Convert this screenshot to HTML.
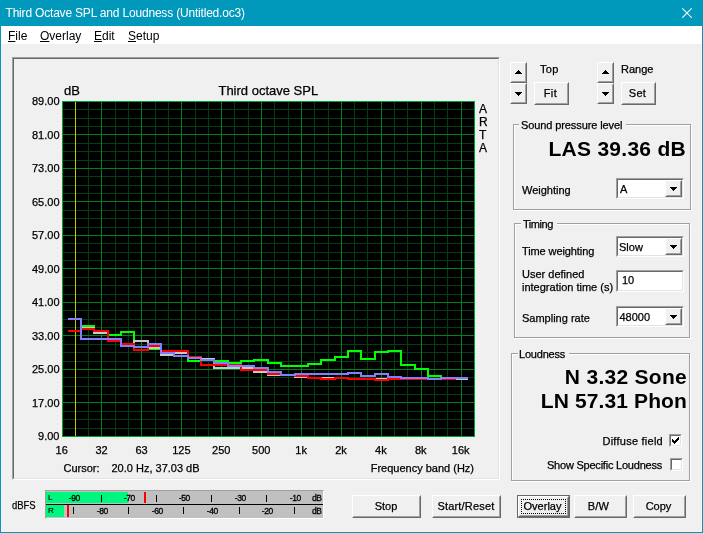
<!DOCTYPE html>
<html><head><meta charset="utf-8"><title>Third Octave SPL and Loudness (Untitled.oc3)</title>
<style>
html,body{margin:0;padding:0}
body{-webkit-text-stroke:0.25px #000;width:703px;height:533px;overflow:hidden;background:#f0f0f0;position:relative;font-family:"Liberation Sans",sans-serif;font-size:11px;color:#000}
#win *{position:absolute;box-sizing:border-box}
#win{box-shadow:inset 0 0 0 1px #fbf3f0;will-change:transform;position:absolute;left:0;top:0;width:703px;height:533px;overflow:hidden;border:1px solid #0099bc;border-top:none;box-sizing:border-box;background:#f0f0f0}
#title{-webkit-text-stroke:0;left:-1px;top:0;width:703px;height:26px;background:#0099bc;color:#fff;font-size:12px}
#title span{left:5.5px;top:6px;line-height:14px;white-space:nowrap;letter-spacing:-0.19px}
#menu{-webkit-text-stroke:0;left:0;top:26px;width:701px;height:18px;background:#fff;font-size:12px}
#menu span{top:3px;line-height:14px;white-space:nowrap}
#menu u{position:static;text-decoration:underline;text-decoration-thickness:1px;text-underline-offset:1px}
.t{white-space:nowrap;line-height:13px}
.frame{border:1px solid;border-color:#a0a0a0 #fff #fff #a0a0a0}
.frame:before{content:"";position:absolute;left:0;top:0;right:0;bottom:0;border:1px solid;border-color:#696969 #e3e3e3 #e3e3e3 #696969;box-sizing:border-box}
.btn{background:#f0f0f0;border:1px solid;border-color:#fff #696969 #696969 #fff;text-align:center;line-height:20px;white-space:nowrap}
.btn:before{content:"";position:absolute;left:0;top:0;right:0;bottom:0;border:1px solid;border-color:#f0f0f0 #a0a0a0 #a0a0a0 #f0f0f0;box-sizing:border-box}
.btn>span{position:relative!important;top:0}
.def{border-color:#696969}
.def:before{border-color:#fff #696969 #696969 #fff}
.def:after{content:"";position:absolute;left:1px;top:1px;right:1px;bottom:1px;border:1px solid;border-color:transparent #a0a0a0 #a0a0a0 transparent;box-sizing:border-box}
.focus{left:3px;top:3px;right:3px;bottom:3px;border:1px dotted #000}
.grp{border:1px solid #a0a0a0;box-shadow:1px 1px 0 #fff, inset 1px 1px 0 #fff}
.grp>b{font-weight:normal;background:#f0f0f0;top:-6px;left:5px;line-height:13px;padding:0 4px 0 2px;white-space:nowrap}
.big{-webkit-text-stroke:0;font-weight:bold;font-size:21px;line-height:22px;white-space:nowrap;text-align:right}
.edit{background:#fff;border:1px solid;border-color:#a0a0a0 #fff #fff #a0a0a0}
.edit:before{content:"";position:absolute;left:0;top:0;right:0;bottom:0;border:1px solid;border-color:#696969 #e3e3e3 #e3e3e3 #696969;box-sizing:border-box}
.dd{right:1px;top:1px;width:17px;bottom:1px}
.chk{width:13px;height:13px;background:#fff;border:1px solid;border-color:#a0a0a0 #fff #fff #a0a0a0}
.chk:before{content:"";position:absolute;left:0;top:0;right:0;bottom:0;border:1px solid;border-color:#696969 #e3e3e3 #e3e3e3 #696969;box-sizing:border-box}
#meter{left:44px;top:490px;width:279px;height:29px;background:#c0c0c0;border:1px solid;border-color:#a0a0a0 #fff #fff #a0a0a0;overflow:hidden}
.mrow{left:0;right:0}
.fill{left:0;top:0;bottom:0;background:#00f77f}
.peak{top:0;bottom:0;width:2px;background:#ff0000}
.msep{left:0;right:0;top:13px;height:1px;background:#000}
.tk{width:1px;height:7px;background:#000}
.ml{-webkit-text-stroke:0.3px #000;font-size:8.5px;line-height:10px;text-align:center;letter-spacing:-0.4px;white-space:nowrap}
</style></head><body>
<div id="win">
<div id="title"><span>Third Octave SPL and Loudness (Untitled.oc3)</span>
<svg width="10" height="10" viewBox="0 0 10 10" style="left:682px;top:8px"><path d="M0.3 0.3L9.7 9.7M9.7 0.3L0.3 9.7" stroke="#fff" stroke-width="1.1" fill="none"/></svg></div>
<div id="menu"><span style="left:7px"><u>F</u>ile</span><span style="left:39px"><u>O</u>verlay</span><span style="left:93px"><u>E</u>dit</span><span style="left:127px"><u>S</u>etup</span></div>

<div class="frame" style="left:11px;top:57px;width:488px;height:423px"></div>
<div style="left:-1px;top:0;width:703px;height:533px"><svg id="chart" width="703" height="533" viewBox="0 0 703 533" style="position:absolute;left:0;top:0" shape-rendering="crispEdges">
<rect x="62" y="101" width="413" height="336" fill="#000"/>
<path d="M62 109.5H475M62 118.5H475M62 126.5H475M62 143.5H475M62 151.5H475M62 160.5H475M62 176.5H475M62 185.5H475M62 193.5H475M62 210.5H475M62 218.5H475M62 227.5H475M62 243.5H475M62 252.5H475M62 260.5H475M62 277.5H475M62 285.5H475M62 294.5H475M62 310.5H475M62 319.5H475M62 327.5H475M62 344.5H475M62 352.5H475M62 361.5H475M62 377.5H475M62 386.5H475M62 394.5H475M62 411.5H475M62 419.5H475M62 428.5H475" stroke="#004010" stroke-width="1" fill="none"/>
<path d="M75.5 101V437M88.5 101V437M115.5 101V437M128.5 101V437M155.5 101V437M168.5 101V437M195.5 101V437M208.5 101V437M234.5 101V437M248.5 101V437M274.5 101V437M288.5 101V437M314.5 101V437M328.5 101V437M354.5 101V437M367.5 101V437M394.5 101V437M407.5 101V437M434.5 101V437M447.5 101V437" stroke="#004010" stroke-width="1" fill="none"/>
<path d="M62 134.5H475M62 168.5H475M62 201.5H475M62 235.5H475M62 268.5H475M62 302.5H475M62 335.5H475M62 369.5H475M62 402.5H475M101.5 101V437M141.5 101V437M181.5 101V437M221.5 101V437M261.5 101V437M301.5 101V437M341.5 101V437M381.5 101V437M421.5 101V437M461.5 101V437" stroke="#008020" stroke-width="1" fill="none"/>
<rect x="62.5" y="101.5" width="412" height="335" fill="none" stroke="#00a030" stroke-width="1"/>
<path d="M75.5 102V436" stroke="#c8c800" stroke-width="1"/>
<path d="M68 331 L81 331 L81 326 L94 326 L94 332 L108 332 L108 335 L121 335 L121 332 L134 332 L134 341 L148 341 L148 349 L161 349 L161 351 L174 351 L174 353 L188 353 L188 361 L201 361 L201 360 L214 360 L214 361 L228 361 L228 363 L241 363 L241 361 L254 361 L254 360 L268 360 L268 363 L281 363 L281 366 L295 366 L295 366 L308 366 L308 364 L321 364 L321 360 L335 360 L335 357 L348 357 L348 351 L361 351 L361 359 L375 359 L375 352 L388 352 L388 351 L401 351 L401 365 L415 365 L415 369 L428 369 L428 376 L441 376 L441 378 L455 378 L455 378 L468 378" stroke="#00ff00" stroke-width="2" fill="none" stroke-linejoin="miter" stroke-linecap="butt"/>
<path d="M68 331 L81 331 L81 328 L94 328 L94 333 L108 333 L108 339 L121 339 L121 344 L134 344 L134 341 L148 341 L148 348 L161 348 L161 355 L174 355 L174 353 L188 353 L188 358 L201 358 L201 359 L214 359 L214 368 L228 368 L228 368 L241 368 L241 368 L254 368 L254 372 L268 372 L268 375 L281 375 L281 375 L295 375 L295 377 L308 377 L308 378 L321 378 L321 378 L335 378 L335 378 L348 378 L348 379 L361 379 L361 379 L375 379 L375 379 L388 379 L388 379 L401 379 L401 378 L415 378 L415 378 L428 378 L428 379 L441 379 L441 379 L455 379 L455 379 L468 379" stroke="#c8c8c8" stroke-width="2" fill="none" stroke-linejoin="miter" stroke-linecap="butt"/>
<path d="M68 331 L81 331 L81 329 L94 329 L94 331 L108 331 L108 341 L121 341 L121 344 L134 344 L134 350 L148 350 L148 346 L161 346 L161 351 L174 351 L174 351 L188 351 L188 357 L201 357 L201 365 L214 365 L214 365 L228 365 L228 365 L241 365 L241 370 L254 370 L254 370 L268 370 L268 374 L281 374 L281 375 L295 375 L295 376 L308 376 L308 378 L321 378 L321 379 L335 379 L335 378 L348 378 L348 379 L361 379 L361 379 L375 379 L375 380 L388 380 L388 379 L401 379 L401 379 L415 379 L415 379 L428 379 L428 379 L441 379 L441 379 L455 379 L455 378 L468 378" stroke="#ff0000" stroke-width="2" fill="none" stroke-linejoin="miter" stroke-linecap="butt"/>
<path d="M68 319 L81 319 L81 339 L94 339 L94 339 L108 339 L108 339 L121 339 L121 346 L134 346 L134 347 L148 347 L148 344 L161 344 L161 353 L174 353 L174 356 L188 356 L188 358 L201 358 L201 360 L214 360 L214 363 L228 363 L228 366 L241 366 L241 366 L254 366 L254 368 L268 368 L268 372 L281 372 L281 375 L295 375 L295 374 L308 374 L308 374 L321 374 L321 374 L335 374 L335 374 L348 374 L348 373 L361 373 L361 376 L375 376 L375 374 L388 374 L388 377 L401 377 L401 378 L415 378 L415 378 L428 378 L428 379 L441 379 L441 378 L455 378 L455 378 L468 378" stroke="#8080ff" stroke-width="2" fill="none" stroke-linejoin="miter" stroke-linecap="butt"/>
<g font-family="Liberation Sans, sans-serif" fill="#000" stroke="#000" stroke-width="0.25" shape-rendering="auto">
<text x="59.5" y="105.0" font-size="11" text-anchor="end">89.00</text>
<text x="59.5" y="138.5" font-size="11" text-anchor="end">81.00</text>
<text x="59.5" y="172.0" font-size="11" text-anchor="end">73.00</text>
<text x="59.5" y="205.5" font-size="11" text-anchor="end">65.00</text>
<text x="59.5" y="239.0" font-size="11" text-anchor="end">57.00</text>
<text x="59.5" y="272.5" font-size="11" text-anchor="end">49.00</text>
<text x="59.5" y="306.0" font-size="11" text-anchor="end">41.00</text>
<text x="59.5" y="339.5" font-size="11" text-anchor="end">33.00</text>
<text x="59.5" y="373.0" font-size="11" text-anchor="end">25.00</text>
<text x="59.5" y="406.5" font-size="11" text-anchor="end">17.00</text>
<text x="59.5" y="440.0" font-size="11" text-anchor="end">9.00</text>
<text x="61.7" y="453.5" font-size="11" text-anchor="middle">16</text>
<text x="101.6" y="453.5" font-size="11" text-anchor="middle">32</text>
<text x="141.5" y="453.5" font-size="11" text-anchor="middle">63</text>
<text x="181.4" y="453.5" font-size="11" text-anchor="middle">125</text>
<text x="221.3" y="453.5" font-size="11" text-anchor="middle">250</text>
<text x="261.2" y="453.5" font-size="11" text-anchor="middle">500</text>
<text x="301.1" y="453.5" font-size="11" text-anchor="middle">1k</text>
<text x="341.0" y="453.5" font-size="11" text-anchor="middle">2k</text>
<text x="380.9" y="453.5" font-size="11" text-anchor="middle">4k</text>
<text x="420.8" y="453.5" font-size="11" text-anchor="middle">8k</text>
<text x="460.7" y="453.5" font-size="11" text-anchor="middle">16k</text>
<text x="64" y="95" font-size="13">dB</text>
<text x="268.3" y="95" font-size="13" text-anchor="middle">Third octave SPL</text>
<text x="479" y="113" font-size="12">A</text>
<text x="479" y="126" font-size="12">R</text>
<text x="479" y="139" font-size="12">T</text>
<text x="479" y="152" font-size="12">A</text>
<text x="63.5" y="472" font-size="11">Cursor:</text>
<text x="111.5" y="472" font-size="11">20.0 Hz, 37.03 dB</text>
<text x="474" y="472" font-size="11" text-anchor="end">Frequency band (Hz)</text>
</g>
</svg></div>

<div class="btn" style="left:509px;top:62px;width:17px;height:21px"><svg class="ar" style="left:4px;top:7px" width="7" height="4" viewBox="0 0 7 4" shape-rendering="crispEdges"><path d="M3 0h1v1h1v1h1v1h1v1h-7v-1h1v-1h1v-1h1z" fill="#000"/></svg></div><div class="btn" style="left:509px;top:83px;width:17px;height:21px"><svg class="ar" style="left:4px;top:8px" width="7" height="4" viewBox="0 0 7 4" shape-rendering="crispEdges"><path d="M0 0h7v1h-1v1h-1v1h-1v1h-1v-1h-1v-1h-1v-1h-1z" fill="#000"/></svg></div>
<span class="t" style="left:539px;top:63px;letter-spacing:0.3px">Top</span>
<div class="btn " style="left:533px;top:82px;width:35px;height:23px;line-height:20px"><span style="left:-1px;letter-spacing:0.5px">Fit</span></div>
<div class="btn" style="left:596px;top:62px;width:17px;height:21px"><svg class="ar" style="left:4px;top:7px" width="7" height="4" viewBox="0 0 7 4" shape-rendering="crispEdges"><path d="M3 0h1v1h1v1h1v1h1v1h-7v-1h1v-1h1v-1h1z" fill="#000"/></svg></div><div class="btn" style="left:596px;top:83px;width:17px;height:21px"><svg class="ar" style="left:4px;top:8px" width="7" height="4" viewBox="0 0 7 4" shape-rendering="crispEdges"><path d="M0 0h7v1h-1v1h-1v1h-1v1h-1v-1h-1v-1h-1v-1h-1z" fill="#000"/></svg></div>
<span class="t" style="left:620px;top:63px">Range</span>
<div class="btn " style="left:620px;top:82px;width:35px;height:23px;line-height:20px"><span style="left:-1px;letter-spacing:0.3px">Set</span></div>

<div class="grp" style="left:512px;top:124px;width:178px;height:86px"><b style="letter-spacing:-0.1px">Sound pressure level</b></div>
<div class="big" style="right:16px;top:138px;letter-spacing:0.28px">LAS 39.36 dB</div>
<span class="t" style="left:521px;top:184px">Weighting</span>
<div class="edit" style="left:615px;top:178px;width:68px;height:21px"><span class="t" style="left:3px;top:4px">A</span><div class="btn dd"><svg class="ar" style="left:4px;top:6px" width="7" height="4" viewBox="0 0 7 4" shape-rendering="crispEdges"><path d="M0 0h7v1h-1v1h-1v1h-1v1h-1v-1h-1v-1h-1v-1h-1z" fill="#000"/></svg></div></div>

<div class="grp" style="left:513px;top:223px;width:176px;height:115px"><b style="left:6px;letter-spacing:-0.45px">Timing</b></div>
<span class="t" style="left:521px;top:245px;letter-spacing:-0.1px">Time weighting</span>
<div class="edit" style="left:615px;top:236px;width:68px;height:21px"><span class="t" style="left:2px;top:4px">Slow</span><div class="btn dd"><svg class="ar" style="left:4px;top:6px" width="7" height="4" viewBox="0 0 7 4" shape-rendering="crispEdges"><path d="M0 0h7v1h-1v1h-1v1h-1v1h-1v-1h-1v-1h-1v-1h-1z" fill="#000"/></svg></div></div>
<span class="t" style="left:521px;top:268px">User defined</span>
<span class="t" style="left:521px;top:281px">integration time (s)</span>
<div class="edit" style="left:615px;top:270px;width:68px;height:22px"><span class="t" style="left:5px;top:3px">10</span></div>
<span class="t" style="left:521px;top:312px">Sampling rate</span>
<div class="edit" style="left:615px;top:306px;width:68px;height:21px"><span class="t" style="left:2.5px;top:4px">48000</span><div class="btn dd"><svg class="ar" style="left:4px;top:6px" width="7" height="4" viewBox="0 0 7 4" shape-rendering="crispEdges"><path d="M0 0h7v1h-1v1h-1v1h-1v1h-1v-1h-1v-1h-1v-1h-1z" fill="#000"/></svg></div></div>

<div class="grp" style="left:510px;top:353px;width:179px;height:128px"><b style="left:6px;padding-left:1px;letter-spacing:-0.2px">Loudness</b></div>
<div class="big" style="right:15px;top:366px;letter-spacing:0.28px">N 3.32 Sone</div>
<div class="big" style="right:15px;top:390px;letter-spacing:0.12px">LN 57.31 Phon</div>
<span class="t" style="right:39px;top:435px;letter-spacing:0.25px">Diffuse field</span>
<div class="chk" style="left:668px;top:434px"><svg width="7" height="7" viewBox="0 0 7 7" shape-rendering="crispEdges" style="left:2px;top:2px"><path d="M0 2h1v3h-1zM1 3h1v3h-1zM2 4h1v3h-1zM3 3h1v3h-1zM4 2h1v3h-1zM5 1h1v3h-1zM6 0h1v3h-1z" fill="#000"/></svg></div>
<span class="t" style="right:40px;top:459px;letter-spacing:-0.22px">Show Specific Loudness</span>
<div class="chk" style="left:669px;top:458px"></div>

<span class="t" style="left:11px;top:499px;transform:scaleX(0.86);transform-origin:0 0">dBFS</span>
<div id="meter">
<div class="mrow" style="top:1px;height:11px"><div class="fill" style="width:82px"></div><div class="peak" style="left:98px"></div></div>
<div class="msep"></div>
<div class="mrow" style="top:14px;height:12px"><div class="fill" style="width:18px"></div><div class="peak" style="left:21px"></div></div>
<span class="ml" style="left:16.3px;width:24px;top:2px">-90</span>
<i class="tk" style="left:27px;top:16px"></i>
<i class="tk" style="left:55px;top:4px"></i>
<span class="ml" style="left:44.3px;width:24px;top:15px">-80</span>
<span class="ml" style="left:71.3px;width:24px;top:2px">-70</span>
<i class="tk" style="left:82px;top:16px"></i>
<i class="tk" style="left:110px;top:4px"></i>
<span class="ml" style="left:99.3px;width:24px;top:15px">-60</span>
<span class="ml" style="left:126.3px;width:24px;top:2px">-50</span>
<i class="tk" style="left:137px;top:16px"></i>
<i class="tk" style="left:165px;top:4px"></i>
<span class="ml" style="left:154.3px;width:24px;top:15px">-40</span>
<span class="ml" style="left:182.3px;width:24px;top:2px">-30</span>
<i class="tk" style="left:193px;top:16px"></i>
<i class="tk" style="left:220px;top:4px"></i>
<span class="ml" style="left:209.3px;width:24px;top:15px">-20</span>
<span class="ml" style="left:237.3px;width:24px;top:2px">-10</span>
<i class="tk" style="left:248px;top:16px"></i>
<span class="ml" style="left:2px;width:auto;font-size:8px;-webkit-text-stroke:0.15px #000;top:2px">L</span>
<span class="ml" style="left:2px;width:auto;font-size:8px;-webkit-text-stroke:0.15px #000;top:15px">R</span>
<span class="ml" style="left:266px;width:auto;top:2px">dB</span>
<span class="ml" style="left:266px;width:auto;top:15px">dB</span>
</div>
<div class="btn " style="left:351px;top:495px;width:69px;height:23px;line-height:20px"><span style="left:-0.5px">Stop</span></div>
<div class="btn " style="left:431px;top:495px;width:69px;height:23px;line-height:20px"><span style="left:-0.5px;letter-spacing:0.2px">Start/Reset</span></div>
<div class="btn def" style="left:516px;top:495px;width:53px;height:23px"><span style="left:-1px">Overlay</span><div class="focus"></div></div>
<div class="btn " style="left:573px;top:495px;width:53px;height:23px;line-height:20px"><span style="left:-2px;letter-spacing:0.2px">B/W</span></div>
<div class="btn " style="left:632px;top:495px;width:53px;height:23px;line-height:20px"><span style="left:-1px">Copy</span></div>
</div>
</body></html>
